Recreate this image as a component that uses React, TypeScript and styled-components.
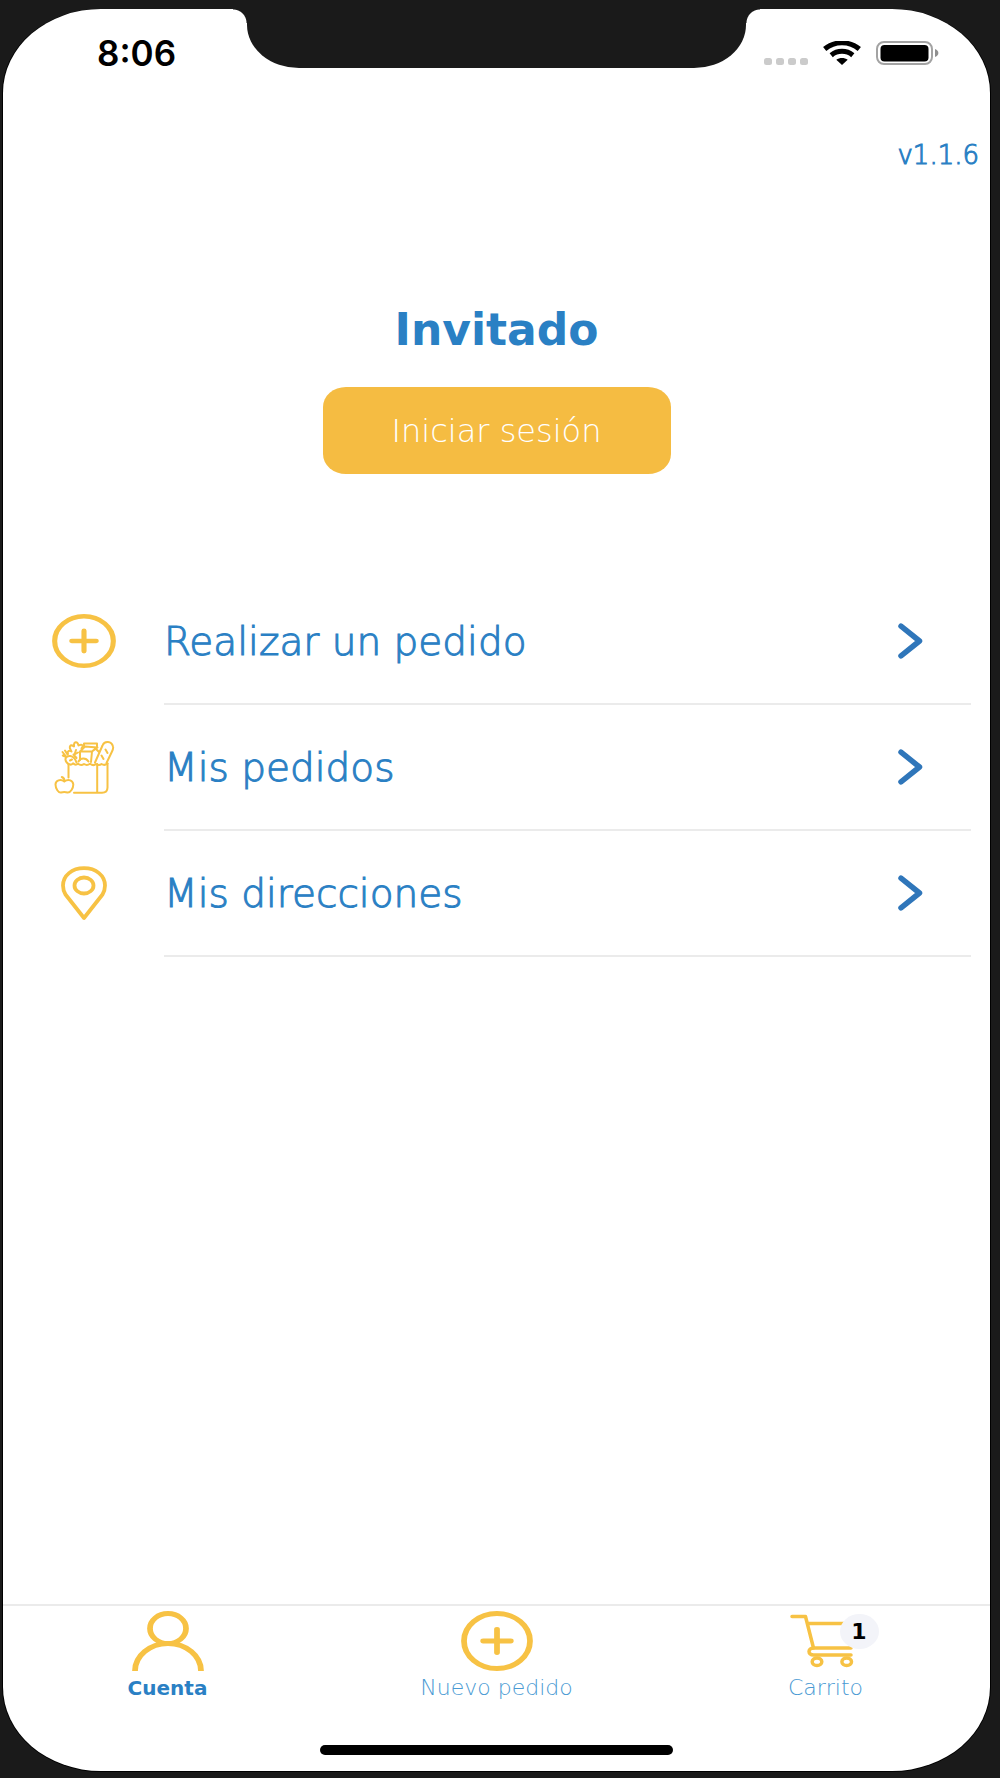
import React from "react";
import styled, { createGlobalStyle } from "styled-components";

const color = {
  frame: "#1a1a1a",
  blue: "#2a80c4",
  blueSoft: "#4a9ad3",
  chevron: "#2f76ba",
  button: "#f5bc42",
  icon: "#f7c244",
  line: "#ebebeb",
};

const GlobalStyle = createGlobalStyle`
  *, *::before, *::after { box-sizing: border-box; }
  body {
    margin: 0;
    background: ${color.frame};
    font-family: "DejaVu Sans Light", "DejaVu Sans", sans-serif;
    font-weight: 200;
    color: ${color.blue};
  }
`;

const Device = styled.div`
  min-height: 100vh;
  padding: 9px 10px 7px 3px;
  display: flex;
  flex-direction: column;
  background: ${color.frame};
`;

const Screen = styled.div`
  flex: 1;
  display: flex;
  flex-direction: column;
  background: #fff;
  border-radius: 98px / 84px;
  box-shadow: -1px 0 0 #000, 1px 0 0 #000, 0 1px 0 #000;
  overflow: hidden;
`;

const StatusBar = styled.header`
  display: grid;
  grid-template-columns: 1fr 50.5% 1fr;
  height: 59px;
`;

const Clock = styled.time`
  padding: 29px 0 0 94px;
  line-height: 30px;
  font-family: Inter, "Liberation Sans", sans-serif;
  font-size: 35px;
  font-weight: 600;
  color: #000;
`;

const Notch = styled.div`
  position: relative;
  background: ${color.frame};
  border-radius: 0 0 52px 52px / 0 0 43px 43px;

  &::before,
  &::after {
    content: "";
    position: absolute;
    top: 0;
    width: 14px;
    height: 14px;
  }
  &::before {
    right: 100%;
    background: radial-gradient(circle at 0 100%, transparent 13px, ${color.frame} 14px);
  }
  &::after {
    left: 100%;
    background: radial-gradient(circle at 100% 100%, transparent 13px, ${color.frame} 14px);
  }
`;

const StatusIcons = styled.div`
  display: flex;
  justify-content: flex-end;
  align-items: flex-end;
  gap: 15px;
  padding: 0 51px 3px 0;
`;

const Main = styled.main`
  flex: 1;
  display: flex;
  flex-direction: column;
`;

const Version = styled.p`
  margin: 67px 11px 0;
  text-align: right;
  font-size: 26px;
  line-height: 40px;
  -webkit-text-stroke: 1px currentColor;
`;

const Welcome = styled.section`
  display: flex;
  flex-direction: column;
  align-items: center;
  gap: 29px;
  padding: 127px 24px 105px;
`;

const Title = styled.h1`
  margin: 0;
  font-family: "DejaVu Sans", sans-serif;
  font-size: 44px;
  line-height: 56px;
  font-weight: 700;
`;

const LoginButton = styled.button`
  width: 348px;
  max-width: 100%;
  height: 87px;
  border: 0;
  border-radius: 23px / 20px;
  background: ${color.button};
  color: #fff;
  font: inherit;
  font-size: 32px;
  cursor: pointer;
`;

const Menu = styled.ul`
  margin: 0;
  padding: 0 19px 0 49px;
  list-style: none;
`;

const MenuLink = styled.a`
  display: flex;
  align-items: stretch;
  gap: 48px;
  color: inherit;
  text-decoration: none;
`;

const MenuIcon = styled.span`
  display: flex;
  align-items: center;
  padding-bottom: 2px;
`;

const MenuBody = styled.span`
  flex: 1;
  display: flex;
  align-items: center;
  justify-content: space-between;
  height: 126px;
  padding-right: 48px;
  border-bottom: 2px solid ${color.line};
  font-size: 39px;
  -webkit-text-stroke: 1px currentColor;
`;

const TabBar = styled.nav`
  display: grid;
  grid-template-columns: repeat(3, 1fr);
  border-top: 2px solid ${color.line};
`;

const Tab = styled.a<{ $active?: boolean }>`
  display: flex;
  flex-direction: column;
  align-items: center;
  gap: 3px;
  padding-top: 5px;
  color: ${(p) => (p.$active ? color.blue : color.blueSoft)};
  font-family: ${(p) => (p.$active ? '"DejaVu Sans", sans-serif' : "inherit")};
  font-weight: ${(p) => (p.$active ? 700 : 200)};
  font-size: ${(p) => (p.$active ? 20 : 22)}px;
  line-height: 28px;
  text-decoration: none;
`;

const TabIcon = styled.span`
  position: relative;
  display: flex;
`;

const Badge = styled.span`
  position: absolute;
  top: 3px;
  left: 50px;
  width: 39px;
  height: 35px;
  border-radius: 50%;
  background: #f3f4f9;
  color: #000;
  font-family: "DejaVu Sans", sans-serif;
  font-weight: 700;
  font-size: 22px;
  line-height: 35px;
  text-align: center;
`;

const HomeArea = styled.footer`
  display: flex;
  justify-content: center;
  padding: 43px 0 16px;
`;

const HomeIndicator = styled.div`
  width: 353px;
  height: 10px;
  border-radius: 5px;
  background: #000;
`;

function SignalIcon() {
  return (
    <svg width="44" height="7" viewBox="0 0 44 7" fill="#cbcbcb" aria-hidden="true">
      {[0, 12, 24, 36].map((x) => (
        <rect key={x} x={x} width="8" height="7" rx="2.5" />
      ))}
    </svg>
  );
}

function WifiIcon() {
  return (
    <svg width="38" height="24" viewBox="0 0 38 24" fill="none" aria-hidden="true">
      <path d="M1.700 8C11.500-.2 26.500-.2 36.300 8" stroke="#000" strokeWidth="5" />
      <path d="M8.200 14.200C14.500 9 23.500 9 29.800 14.200" stroke="#000" strokeWidth="5" />
      <path d="M13.300 18.800C16.500 16.300 21.500 16.300 24.700 18.800L19 24Z" fill="#000" />
    </svg>
  );
}

function BatteryIcon() {
  return (
    <svg width="63" height="24" viewBox="0 0 63 24" fill="none" aria-hidden="true">
      <rect x="1" y="1" width="55" height="22" rx="7" stroke="#a3a3a3" strokeWidth="2" />
      <rect x="4.500" y="4" width="48" height="16.500" rx="4" fill="#000" />
      <path d="M59 8c4.500 1.500 4.500 6.500 0 8z" fill="#8f8f8f" />
    </svg>
  );
}

function PlusCircleIcon({ width, height }: { width: number; height: number }) {
  return (
    <svg
      width={width}
      height={height}
      viewBox="0 0 60 60"
      preserveAspectRatio="none"
      fill="none"
      stroke={color.icon}
      strokeWidth="4.800"
      strokeLinecap="round"
      aria-hidden="true"
    >
      <circle cx="30" cy="30" r="27.500" />
      <path d="M18.500 30h23M30 18.500v23" />
    </svg>
  );
}

function GroceriesIcon() {
  return (
    <svg
      width="64"
      height="54"
      viewBox="0 0 64 54"
      fill="none"
      stroke={color.icon}
      strokeWidth="2"
      strokeLinecap="round"
      strokeLinejoin="round"
      aria-hidden="true"
    >
      <path d="M16.500 37.500V24M22 52.700H50Q55.500 52.700 55.500 47.500V23.500M45.200 24V52.700" />
      <path d="M16.500 24Q13 21.500 13.500 19C14 15 22 14 24.500 22.500" />
      <path d="M16.500 24q2.500 1.500 4.500-.7 2.500 2.500 5 .5 3 2.300 6 .2 3 2 6-.2 3.500 2.500 6 .2 3 2 5.500 0 3 2 6-.5" />
      <path d="M26.500 21.500C28.500 17.500 34 17.500 36.500 21.500M18 20.500l2-1" />
      <path d="M14 16.500 10.500 12M15.500 14.500 13 10.500M13 16.500 10.800 15.500M16 14C15 11 17 10 19.500 11.500 16 6 18.500 4 22 6.500 21.500 1 25.500 1 26.500 5.500 30 3.500 32 5.500 29.500 8.500M24 10l-1.500 4.500 3.500-2M21.500 14.500l3 3.500" />
      <path d="M28 20V11.500H40L39 22M28 11.500 33 6.500 45.500 7.500 40 11.500M32 6.500V3.500H45V7.500M40 11.500 43.500 8.500" />
      <path d="M43 22.500 50.500 5.500C52.500.500 59.500 1 61 6.500 61.500 8 61 9.500 60 11.500L54.500 23M43.500 8.500 47 12M53.500 9.500l2 3.500M49.500 15.500l2 3.500" />
      <path d="M12.300 41.500C8.500 38.500 3.500 40.500 3.500 44.500 3.500 48.500 6.500 53 9 52.500Q12.300 51.300 15.500 52.500C18.500 53 21.300 48 21.300 44.500 21 40.500 16.500 38.500 12.300 41.500ZM12.300 41.500Q12.800 38 9.800 37" />
    </svg>
  );
}

function PinIcon() {
  return (
    <svg
      width="64"
      height="54"
      viewBox="0 0 64 54"
      fill="none"
      stroke={color.icon}
      strokeWidth="3.800"
      strokeLinejoin="round"
      aria-hidden="true"
    >
      <path d="M32 52 13.500 28.500C11.800 25.500 11 22.500 11 19.500 11 9.500 20 2.200 32 2.200S53 9.500 53 19.500C53 22.500 52.200 25.500 50.500 28.500Z" />
      <ellipse cx="32" cy="19.500" rx="9.500" ry="8" />
    </svg>
  );
}

function PersonIcon() {
  return (
    <svg
      width="72"
      height="60"
      viewBox="0 0 60 60"
      preserveAspectRatio="none"
      fill="none"
      stroke={color.icon}
      strokeWidth="4.800"
      aria-hidden="true"
    >
      <circle cx="30" cy="17.500" r="15" />
      <path d="M2.500 60a27.500 27.500 0 0 1 55 0" />
    </svg>
  );
}

function CartIcon() {
  return (
    <svg
      width="72"
      height="60"
      viewBox="0 0 72 60"
      fill="none"
      stroke={color.icon}
      strokeWidth="3.500"
      strokeLinecap="round"
      strokeLinejoin="round"
      aria-hidden="true"
    >
      <path d="M2 5.500H15.500L23.500 37H61M18.500 12.500H58" />
      <path d="M23.500 37C17.500 37 17.500 44 23.500 44H61" />
      <ellipse cx="27" cy="50.700" rx="4.800" ry="3.800" />
      <ellipse cx="56.700" cy="50.700" rx="4.800" ry="3.800" />
    </svg>
  );
}

function ChevronIcon() {
  return (
    <svg
      width="26"
      height="36"
      viewBox="0 0 26 36"
      fill="none"
      stroke={color.chevron}
      strokeWidth="5.500"
      strokeLinecap="round"
      strokeLinejoin="round"
      aria-hidden="true"
    >
      <path d="M4 3.200 22.500 18 4 32.800" />
    </svg>
  );
}

const menuItems = [
  { label: "Realizar un pedido", icon: <PlusCircleIcon width={64} height={54} /> },
  { label: "Mis pedidos", icon: <GroceriesIcon /> },
  { label: "Mis direcciones", icon: <PinIcon /> },
];

export default function App() {
  return (
    <Device>
      <GlobalStyle />
      <Screen>
        <StatusBar>
          <Clock>8:06</Clock>
          <Notch />
          <StatusIcons>
            <SignalIcon />
            <WifiIcon />
            <BatteryIcon />
          </StatusIcons>
        </StatusBar>

        <Main>
          <Version>v1.1.6</Version>
          <Welcome>
            <Title>Invitado</Title>
            <LoginButton type="button">Iniciar sesión</LoginButton>
          </Welcome>
          <Menu>
            {menuItems.map((item) => (
              <li key={item.label}>
                <MenuLink href="#">
                  <MenuIcon>{item.icon}</MenuIcon>
                  <MenuBody>
                    {item.label}
                    <ChevronIcon />
                  </MenuBody>
                </MenuLink>
              </li>
            ))}
          </Menu>
        </Main>

        <TabBar>
          <Tab href="#" $active aria-current="page">
            <TabIcon>
              <PersonIcon />
            </TabIcon>
            Cuenta
          </Tab>
          <Tab href="#">
            <TabIcon>
              <PlusCircleIcon width={72} height={60} />
            </TabIcon>
            Nuevo pedido
          </Tab>
          <Tab href="#">
            <TabIcon>
              <CartIcon />
              <Badge>1</Badge>
            </TabIcon>
            Carrito
          </Tab>
        </TabBar>
        <HomeArea>
          <HomeIndicator />
        </HomeArea>
      </Screen>
    </Device>
  );
}
